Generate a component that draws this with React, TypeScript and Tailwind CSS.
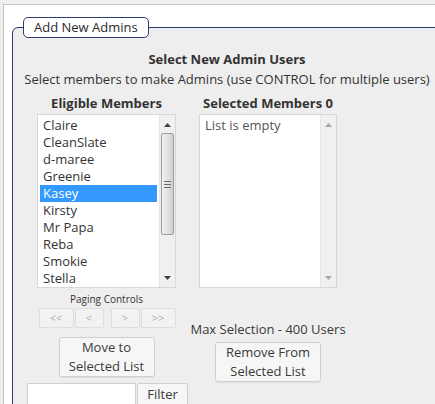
import React from "react";

const members = ["Claire", "CleanSlate", "d-maree", "Greenie", "Kasey", "Kirsty", "Mr Papa", "Reba", "Smokie", "Stella"];

function UpArrow({ light }: { light?: boolean }) {
  return (
    <svg width="7" height="4" viewBox="0 0 7 4">
      <path d="M0 4 L3.5 0 L7 4 Z" fill={light ? "#a8a8a8" : "#404040"} />
    </svg>
  );
}
function DownArrow({ light }: { light?: boolean }) {
  return (
    <svg width="7" height="4" viewBox="0 0 7 4">
      <path d="M0 0 L7 0 L3.5 4 Z" fill={light ? "#a8a8a8" : "#404040"} />
    </svg>
  );
}

function ScrollBar({ thumb }: { thumb: boolean }) {
  return (
    <div className="w-[16px] h-full flex flex-col bg-[#f0f0f0] border-l border-[#e6e6e6]">
      <div className="h-[18px] flex items-center justify-center pt-[1px]">
        <UpArrow light={!thumb} />
      </div>
      <div className="flex-1 flex flex-col">
        {thumb && (
          <div className="ml-[1px] mr-[1px] h-[102px] rounded-[2px] border border-[#9d9d9d] bg-gradient-to-r from-[#f2f2f2] via-[#e2e2e2] to-[#cfcfcf] flex flex-col items-center justify-center gap-[2px]">
            <div className="w-[7px] h-px bg-[#6b6b6b]" />
            <div className="w-[7px] h-px bg-[#6b6b6b]" />
            <div className="w-[7px] h-px bg-[#6b6b6b]" />
          </div>
        )}
      </div>
      <div className="h-[18px] flex items-center justify-center">
        <DownArrow light={!thumb} />
      </div>
    </div>
  );
}

function PageBtn({ label, w }: { label: string; w: string }) {
  return (
    <div className={`${w} h-[20px] flex items-center justify-center border border-[#dedede] rounded-[2px] bg-[#f2f2f2] text-[11px] text-[#b0b0b0] leading-[16px]`}>
      {label}
    </div>
  );
}

export default function App() {
  return (
    <div className="w-[435px] h-[404px] overflow-hidden bg-[#efefef] pl-[3px] pt-[4px] font-['Open_Sans',sans-serif] text-[13px] text-[#333333]">
      <div className="h-[420px] w-[460px] border-l border-t border-[#c4c4c4] bg-white pl-[8px] pt-[12px]">
        <fieldset className="w-[430px] h-[420px] border border-[#2e3d6e] rounded-tl-[6px] bg-[#eeeeee] p-0 m-0">
          <legend className="ml-[10px] px-[10px] h-[21px] leading-[19px] border border-[#2e3d6e] rounded-[5px] bg-white text-[13px] text-[#2a2a2a]">
            Add New Admins
          </legend>
          <div className="mt-[11px] h-[20px] leading-[20px] text-center font-bold">Select New Admin Users</div>
          <div className="h-[20px] leading-[20px] text-center whitespace-nowrap">
            Select members to make Admins (use CONTROL for multiple users)
          </div>
          <div className="flex items-start mt-[4px] ml-[24px] gap-[23px]">
            {/* Left column */}
            <div className="w-[139px] flex flex-col items-center">
              <div className="h-[20px] leading-[20px] font-bold whitespace-nowrap">Eligible Members</div>
              <div className="mt-[1px] w-[139px] h-[174px] bg-white border border-[#d8d8d8] flex">
                <div className="flex-1 overflow-hidden pl-[2px] pt-[2px] pr-[2px]">
                  {members.map((m) => (
                    <div
                      key={m}
                      className={
                        m === "Kasey"
                          ? "h-[17px] leading-[17px] pl-[3px] bg-[#3399ff] text-white"
                          : "h-[17px] leading-[17px] pl-[3px]"
                      }
                    >
                      {m}
                    </div>
                  ))}
                </div>
                <ScrollBar thumb />
              </div>
              <div className="mt-[4px] h-[14px] leading-[14px] text-[10px] whitespace-nowrap">Paging Controls</div>
              <div className="mt-[2px] flex ml-[1px]">
                <PageBtn label="<<" w="w-[35px]" />
                <div className="w-[1px]" />
                <PageBtn label="<" w="w-[29px]" />
                <div className="w-[7px]" />
                <PageBtn label=">" w="w-[29px]" />
                <div className="w-[1px]" />
                <PageBtn label=">>" w="w-[35px]" />
              </div>
              <div className="mt-[9px] w-[96px] h-[40px] border border-[#cfcfcf] rounded-[3px] bg-[#f6f6f6] shadow-[0_1px_1px_rgba(0,0,0,0.06)] flex flex-col items-center justify-center leading-[19px] text-[#3a3a3a]">
                <div>Move to</div>
                <div>Selected List</div>
              </div>
            </div>
            {/* Right column */}
            <div className="w-[138px] flex flex-col items-center">
              <div className="h-[20px] leading-[20px] font-bold whitespace-nowrap">Selected Members 0</div>
              <div className="mt-[1px] w-[138px] h-[174px] bg-white border border-[#d8d8d8] flex">
                <div className="flex-1 pl-[5px] pt-[2px] leading-[17px] text-[#555]">List is empty</div>
                <ScrollBar thumb={false} />
              </div>
              <div className="mt-[32px] h-[18px] leading-[18px] whitespace-nowrap text-[#3a3a3a]">Max Selection - 400 Users</div>
              <div className="mt-[4px] w-[106px] h-[40px] border border-[#cfcfcf] rounded-[3px] bg-[#f6f6f6] shadow-[0_1px_1px_rgba(0,0,0,0.06)] flex flex-col items-center justify-center leading-[19px] text-[#3a3a3a]">
                <div>Remove From</div>
                <div>Selected List</div>
              </div>
            </div>
          </div>
          <div className="flex ml-[14px] mt-[1px]">
            <div className="w-[109px] h-[30px] bg-white border border-[#d0d0d0]" />
            <div className="ml-[1px] w-[51px] h-[30px] border border-[#cfcfcf] rounded-[2px] bg-[#f6f6f6] flex justify-center pt-[1px] leading-[19px] text-[#3a3a3a]">
              Filter
            </div>
          </div>
        </fieldset>
      </div>
    </div>
  );
}
